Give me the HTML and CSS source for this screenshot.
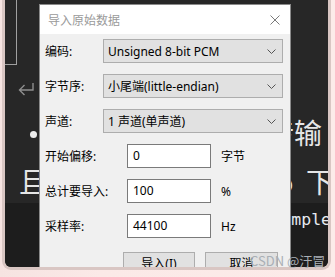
FILE: index.html
```html
<!DOCTYPE html>
<html lang="zh-CN">
<head>
    <meta charset="UTF-8">
    <meta name="viewport" content="width=device-width, initial-scale=1.0">
    <title>导入原始数据</title>

    <link rel="stylesheet" href="styles.css">
</head>

<body>

    <div class="frame">
        <main class="panel">

            <div class="corner-box"></div>

            <svg class="return-mark" width="16" height="14" viewBox="0 0 16 14">
                <path d="M15 1 V8 H1.5 M6.5 3 L1.5 8 L6.5 13" fill="none" stroke="#8e8e8e" stroke-width="1.4"/>
            </svg>

            <div class="line line-first">
                <span class="bullet"></span>
                <span class="tail">传输</span>
            </div>
            <div class="line line-second">
                <span>且</span>
                <span class="tail">o&nbsp;&nbsp;下载</span>
            </div>

            <div class="code-band">
                <span class="code">let sample</span>
            </div>

            <section class="dialog">
                <div class="title-bar">
                    <p class="title">导入原始数据</p>
                    <svg class="close" width="10" height="10" viewBox="0 0 10 10">
                        <path d="M0.5 0.5 L9.5 9.5 M9.5 0.5 L0.5 9.5" stroke="#7a7a7a" stroke-width="1"/>
                    </svg>
                </div>

                <div class="dialog-body">
                    <div class="row">
                        <p class="label">编码:</p>
                        <div class="combo">
                            <span>Unsigned 8-bit PCM</span>
                            <svg width="9" height="5" viewBox="0 0 9 5"><path d="M0.5 0.5 L4.5 4.5 L8.5 0.5" fill="none" stroke="#555" stroke-width="1"/></svg>
                        </div>
                    </div>
                    <div class="row">
                        <p class="label">字节序:</p>
                        <div class="combo">
                            <span>小尾端(little-endian)</span>
                            <svg width="9" height="5" viewBox="0 0 9 5"><path d="M0.5 0.5 L4.5 4.5 L8.5 0.5" fill="none" stroke="#555" stroke-width="1"/></svg>
                        </div>
                    </div>
                    <div class="row">
                        <p class="label">声道:</p>
                        <div class="combo">
                            <span>1 声道(单声道)</span>
                            <svg width="9" height="5" viewBox="0 0 9 5"><path d="M0.5 0.5 L4.5 4.5 L8.5 0.5" fill="none" stroke="#555" stroke-width="1"/></svg>
                        </div>
                    </div>

                    <div class="row">
                        <p class="label label-wide">开始偏移:</p>
                        <div class="field">0</div>
                        <p class="unit">字节</p>
                    </div>
                    <div class="row">
                        <p class="label label-wide">总计要导入:</p>
                        <div class="field">100</div>
                        <p class="unit">%</p>
                    </div>
                    <div class="row">
                        <p class="label label-wide">采样率:</p>
                        <div class="field">44100</div>
                        <p class="unit">Hz</p>
                    </div>

                    <div class="buttons">
                        <div class="btn">导入(I)</div>
                        <div class="btn btn-cancel">取消</div>
                    </div>
                </div>
            </section>
        </main>
    </div>

    <p class="watermark">CSDN @汙冒</p>

</body>
</html>
```

FILE: styles.css
```css
*{
    padding: 0;
    margin: 0;
    box-sizing: border-box;
}
body{
    width: 335px;
    height: 277px;
    overflow: hidden;
    position: relative;
    background: linear-gradient(to right, #f6e3e1, #fbe9e7 30%, #fcebe9);
    font-family: "Noto Sans CJK SC", "Noto Sans", sans-serif;
}

.frame{
    margin-left: 2px;
    width: 329px;
    border: 3px solid #d9c6c3;
    border-top: none;
    border-radius: 0 0 9px 9px;
}
.panel{
    position: relative;
    height: 267px;
    background-color: #272727;
    border-radius: 0 0 6px 6px;
    overflow: hidden;
    color: #e6e6e6;
}

.corner-box{
    width: 12px;
    height: 65px;
    border-right: 1px solid #a0a0a0;
    border-bottom: 1px solid #a0a0a0;
}
.return-mark{
    display: block;
    margin: 17px 0 0 13px;
}

.line{
    display: flex;
    align-items: center;
    height: 44px;
    font-size: 28px;
    line-height: 44px;
    white-space: nowrap;
}
.line-first{
    margin-top: 14px;
    padding-left: 25px;
}
.line-second{
    margin-top: 5px;
    padding-left: 14px;
}
.bullet{
    width: 7px;
    height: 7px;
    margin-top: 5px;
    border-radius: 50%;
    background-color: #ececec;
}
.tail{
    margin-left: auto;
}
.line-first .tail{
    margin-right: 6px;
}
.line-second .tail{
    margin-right: -34px;
}

.code-band{
    display: flex;
    height: 64px;
    background-color: #1d1d1d;
}
.code{
    margin-left: auto;
    margin-right: -3px;
    font-family: "DejaVu Sans Mono", monospace;
    font-size: 16.5px;
    line-height: 34px;
    color: #e6eaf0;
    white-space: nowrap;
}

.dialog{
    position: absolute;
    top: 4px;
    left: 34px;
    width: 252px;
    height: 290px;
    border: 1px solid #8a8a8a;
    background-color: #f0f0f0;
    font-family: "Noto Sans", "Noto Sans CJK SC", sans-serif;
    font-size: 12px;
    color: #000;
}
.title-bar{
    display: flex;
    align-items: center;
    justify-content: space-between;
    height: 29px;
    padding: 0 10px 0 8px;
    background-color: #fff;
}
.title{
    color: #9a9a9a;
    font-family: "Noto Sans CJK SC", sans-serif;
}

.dialog-body{
    display: flex;
    flex-direction: column;
    gap: 11px;
    padding: 5px 7px 0 5px;
}
.row{
    display: flex;
    align-items: center;
    height: 24px;
}
.label{
    width: 58px;
    flex-shrink: 0;
}
.label-wide{
    width: 82px;
}
.combo{
    display: flex;
    align-items: center;
    justify-content: space-between;
    width: 180px;
    height: 24px;
    padding: 0 6px 0 4px;
    border: 1px solid #adadad;
    background-color: #e1e1e1;
}
.field{
    width: 84px;
    height: 24px;
    padding-left: 5px;
    line-height: 22px;
    border: 1px solid #7a7a7a;
    background-color: #fff;
}
.unit{
    margin-left: 10px;
}

.buttons{
    display: flex;
    gap: 10px;
    margin-top: 3px;
    padding-left: 78px;
}
.btn{
    width: 72px;
    height: 23px;
    line-height: 21px;
    text-align: center;
    border: 1px solid #adadad;
    background-color: #e1e1e1;
}
.btn-cancel{
    width: 73px;
}

.watermark{
    position: absolute;
    left: 250px;
    top: 253px;
    font-size: 13px;
    line-height: 16px;
    color: #a9afb5;
    white-space: nowrap;
}
```
